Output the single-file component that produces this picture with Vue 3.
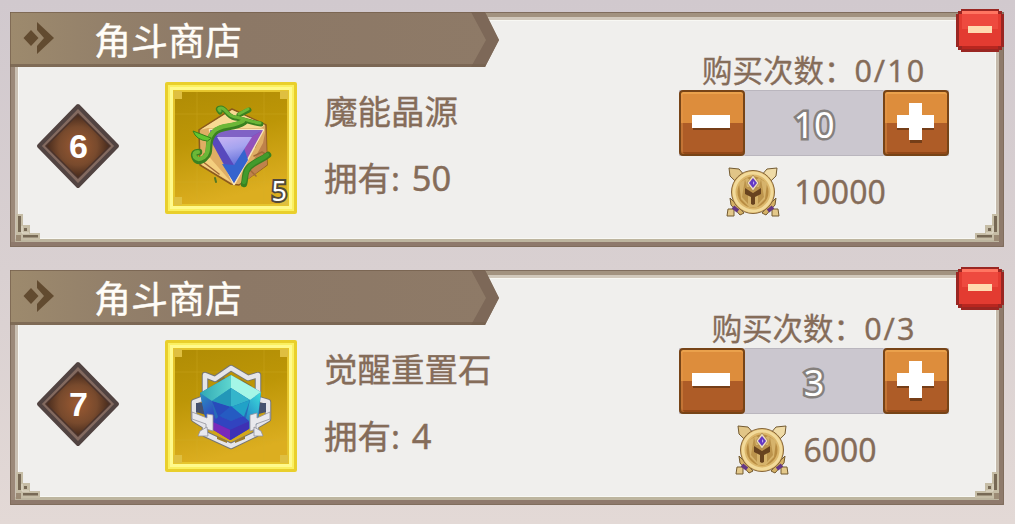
<script setup>
import { ref } from 'vue'

const goods = ref([
  { rank: 6, icon: 'source', name: '魔能晶源', owned: 50, pack: 5, count: 10, limit: 10, unit: 1000 },
  { rank: 7, icon: 'stone', name: '觉醒重置石', owned: 4, pack: 0, count: 3, limit: 3, unit: 2000 },
])

function step(g, n) {
  g.count = Math.min(g.limit, Math.max(1, g.count + n))
}
function remove(i) {
  goods.value.splice(i, 1)
}
</script>

<template>
  <div class="page">
    <section v-for="(g, i) in goods" :key="g.rank" class="card">
      <div class="left">
        <header class="banner">
          <svg class="banner-bg" width="489" height="55" viewBox="0 0 489 55">
            <defs>
              <linearGradient :id="'bn' + i" x1="0" x2="1" y1="0" y2="0">
                <stop offset="0" stop-color="#9d8a6d" />
                <stop offset=".2" stop-color="#93806a" />
                <stop offset=".45" stop-color="#8c7866" />
                <stop offset="1" stop-color="#8e7a67" />
              </linearGradient>
            </defs>
            <path d="M0 0H475L489 28L475 55H0Z" :fill="`url(#bn${i})`" />
            <path d="M461 0H475L489 28L475 55H461L476 28Z" fill="#7d6858" />
            <path d="M0 52H476L475 55H0Z" fill="#75614f" opacity=".75" />
            <path d="M0 .5H475M.5 0V55" stroke="#745e4c" opacity=".7" fill="none" />
            <path d="M13.5 26L21 18L28.5 26L21 34Z" fill="#624b30" />
            <path d="M27 10L44 26L27 42V34L34 26L27 18Z" fill="#624b30" />
          </svg>
          <h2>角斗商店</h2>
        </header>

        <div class="goods">
          <div class="rank">
            <svg width="84" height="86" viewBox="0 0 84 86">
              <defs>
                <radialGradient :id="'rk' + i">
                  <stop offset="0" stop-color="#9c5a32" />
                  <stop offset=".6" stop-color="#784a2d" />
                  <stop offset="1" stop-color="#44291c" />
                </radialGradient>
              </defs>
              <path d="M42 3L81 43L42 83L3 43Z" fill="#82695f" stroke="#514341" stroke-width="4" stroke-linejoin="round" />
              <path d="M42 11L74 43L42 75L10 43Z" :fill="`url(#rk${i})`" stroke="#4b332b" stroke-width="1.5" />
            </svg>
            <b>{{ g.rank }}</b>
          </div>

          <div class="slot">
            <svg width="134" height="134" viewBox="0 0 134 134">
              <defs>
                <linearGradient :id="'gd' + i" x1="0" x2=".25" y1="0" y2="1">
                  <stop offset="0" stop-color="#b08c05" />
                  <stop offset=".45" stop-color="#bd9607" />
                  <stop offset="1" stop-color="#dcae20" />
                </linearGradient>
                <linearGradient id="gemIn" x1="0" x2=".3" y1="0" y2="1">
                  <stop offset="0" stop-color="#c9b4f3" />
                  <stop offset=".5" stop-color="#a5a4ef" />
                  <stop offset="1" stop-color="#6b75dc" />
                </linearGradient>
                <linearGradient id="cubeTop" x1="0" x2="1" y1="0" y2="0">
                  <stop offset="0" stop-color="#31a8b4" />
                  <stop offset="1" stop-color="#5ed6cf" />
                </linearGradient>
                <linearGradient id="cubeL" x1="0" x2=".6" y1="0" y2="1">
                  <stop offset="0" stop-color="#2a93c0" />
                  <stop offset=".5" stop-color="#2f4fc0" />
                  <stop offset="1" stop-color="#6326b2" />
                </linearGradient>
                <linearGradient id="cubeR" x1="1" x2=".2" y1="0" y2="1">
                  <stop offset="0" stop-color="#3fe0dc" />
                  <stop offset=".5" stop-color="#2595c9" />
                  <stop offset="1" stop-color="#3532b8" />
                </linearGradient>
              </defs>
              <rect x="1" y="1" width="132" height="132" rx="2" fill="#e9cf2c" />
              <rect x="4" y="4" width="126" height="126" fill="#fbf060" />
              <rect x="6" y="6" width="122" height="122" fill="#fffa8c" />
              <rect x="9" y="9" width="116" height="116" fill="#e6c52d" />
              <rect x="11" y="11" width="112" height="112" :fill="`url(#gd${i})`" />
              <path d="M33 11V123M100 11V123M11 33H123M11 101H123" stroke="#d5b12c" opacity=".3" />
              <path d="M10 10h8v8h-8zM124 10h-8v8h8zM10 124h8v-8h-8zM124 124h-8v-8h8z" fill="#dfbf40" />

              <g v-if="g.icon === 'source'" stroke-linejoin="round" stroke-linecap="round">
                <path d="M68 28L102 44L103 84L75 104L67 103L36 84L35 49Z" fill="#dfae64" stroke="#8b5a1d" stroke-width="1.5" />
                <path d="M68 29L101 44L97 47L44 47L36 49Z" fill="#f8da93" />
                <path d="M102 47L103 84L76 104L99 62Z" fill="#bf824b" />
                <path d="M41 71L68 102L38 84Z" fill="#f4cf7f" />
                <path d="M40 73L38 80L55 93M90 75l8 -4l5 3M84 87l8 8M97 53l-6 13" fill="none" stroke="#a26a36" stroke-width="1.5" />
                <path d="M46 49H99L70 103Z" fill="#4c59cf" stroke="#f8e6ba" stroke-width="2.5" />
                <path d="M46 49H99L87 56H54Z" fill="#8062c5" />
                <path d="M46 49L54 56L70 84V102L48 62Z" fill="#5849bd" />
                <path d="M99 49L87 56L70 84V102Z" fill="#9252ba" />
                <path d="M84 79L70 102L58 83L70 84L80 67Z" fill="#3564ce" />
                <path d="M53 56H88L70 84Z" fill="url(#gemIn)" />
                <g fill="none" stroke="#3a8120" stroke-width="6.5">
                  <path d="M80 41C70 48 56 44 50 52C41 61 49 71 41 77Q34 83 31 77Q28 71 35 71" />
                  <path d="M56 31Q52 27 57 27C62 27 63 36 71 37S87 42 97 43M75 34L85 29" stroke-width="5" />
                  <path d="M80 103C82 97 79 89 89 83S99 78 104 74" />
                </g>
                <g fill="none" stroke="#6cb737" stroke-width="4.2">
                  <path d="M79 40C69 46 55 43 49 51C40 61 48 69 40 76Q34 80 31 76Q29 71 34 71" />
                  <path d="M56 30Q53 27 57 27C62 27 63 35 71 36S87 41 96 42M75 33L84 28" stroke-width="3" />
                  <path d="M80 101C82 96 80 88 90 82S99 77 103 74" stroke="#429b2c" />
                </g>
                <path d="M47 57L29 50Q32 59 43 60Z" fill="#62c631" stroke="#38821c" />
                <path d="M51 97l1 4" stroke="#537824" stroke-width="2" />
              </g>

              <g v-else stroke-linejoin="round">
                <g fill="none" stroke="#767674" stroke-width="6.5">
                  <path d="M41 56V36L51 40L67 29L84 39L94 36V53M38 60L30 63V80L41 87M94 60L104 63V80L92 87M41 84V95L67 107L92 95V82" />
                </g>
                <g fill="none" stroke="#e5e5e9" stroke-width="4.5">
                  <path d="M41 56V36L51 40L67 29L84 39L94 36V53M38 60L30 63V80L41 87M94 60L104 63V80L92 87M41 84V95L67 107L92 95V82" />
                </g>
                <path d="M53 42L60 38L63 41L55 45ZM75 39L88 47L82 46Z" fill="#8a7432" />
                <path d="M32 64H42V76L32 73ZM91 64H102V73L91 76Z" fill="#45516e" />
                <path d="M67 36L97 53L94 84L67 101L43 87L36 54Z" fill="#276cb8" />
                <path d="M36 54L48 62L51 79L66 88V101L43 87Z" fill="url(#cubeL)" />
                <path d="M97 53L86 61L82 79L66 88V101L93 85Z" fill="url(#cubeR)" />
                <path d="M67 36V49L48 62L36 54Z" fill="url(#cubeTop)" />
                <path d="M67 36L97 53L86 61L67 49Z" fill="#a4f6e7" />
                <path d="M67 49L86 61L67 68L48 62Z" fill="#35b5cb" />
                <path d="M67 49V68L48 62Z" fill="#2397b8" />
                <path d="M48 62L67 68L55 80Z" fill="#284bbb" />
                <path d="M86 61L67 68L79 80Z" fill="#21a2c7" />
                <path d="M67 67L79 77L67 82L55 77Z" fill="#255bc2" />
                <path d="M55 77L67 82V91L49 83ZM79 77L67 82V91L85 82Z" fill="#3144c0" />
                <path d="M49 83L66 91V101L46 89Z" fill="#7929bb" />
                <path d="M66 91L85 82V90L66 101Z" fill="#3e31b4" />
                <g fill="#e9e9ed" stroke="#90909a" stroke-width=".8">
                  <path d="M28 73L43 79L43 75L49 76V92L42 90V85L28 80Z" />
                  <path d="M106 73L93 79V74L86 76V92L92 90V85L106 80Z" />
                  <path d="M36 92L43 88L44 97L34 97ZM97 92L90 88V97H99Z" />
                </g>
                <path d="M53 97L63 102V104L53 100ZM71 102L81 97V100L71 104Z" fill="#9b7a2a" />
              </g>
            </svg>
            <span v-if="g.pack" class="pack">{{ g.pack }}</span>
          </div>

          <div class="info">
            <p>{{ g.name }}</p>
            <p>拥有: <span class="owned">{{ g.owned }}</span></p>
          </div>
        </div>
      </div>

      <div class="buy">
        <p class="limit"><span>购买次数：</span><span class="nums">0/{{ g.limit }}</span></p>
        <div class="stepper">
          <button @click="step(g, -1)">
            <svg width="40" height="40" viewBox="0 0 40 40">
              <path d="M1 14H38V27H1Z" fill="#753e18" />
              <path d="M0 12H38V25H0Z" fill="#fff" />
            </svg>
          </button>
          <output>{{ g.count }}</output>
          <button @click="step(g, 1)">
            <svg width="40" height="40" viewBox="0 0 40 40">
              <path d="M14 2H26V14H38V27H26V40H14V27H1V14H14Z" fill="#753e18" />
              <path d="M13 0H26V12H38V25H26V37H13V25H1V12H13Z" fill="#fff" />
            </svg>
          </button>
        </div>
        <div class="price">
          <svg width="54" height="50" viewBox="0 0 54 50">
            <g stroke="#735a31" stroke-width="1" stroke-linejoin="round">
              <path d="M3 1L13 2L46 40L41 45L4 9Z" fill="#e1c587" />
              <path d="M51 1L41 2L8 40L13 45L50 9Z" fill="#efdba7" />
              <path d="M4 31L10 37L18 46L14 48L5 38Z" fill="#d5b165" />
              <path d="M50 31L44 37L36 46L40 48L49 38Z" fill="#d5b165" />
              <path d="M2 42L8 42L8 49H1ZM52 42L46 42L46 49H53Z" fill="#e4c98b" />
            </g>
            <path d="M7 40l5 4M47 40l-5 4" stroke="#643783" stroke-width="4" />
            <circle cx="27" cy="25" r="21.5" fill="#dcb76b" stroke="#866538" />
            <circle cx="27" cy="25" r="19" fill="none" stroke="#f2da9a" stroke-width="3" />
            <circle cx="27" cy="25" r="15.5" fill="#b88c42" />
            <path d="M13 16L21 11L27 14L33 11L41 16L39 32L31 40H23L15 32Z" fill="#d6b36b" />
            <path d="M19 12L16 30L22 37V26L18 21L27 26L36 21L32 26V37L38 30L35 12L33 20H21Z" fill="#bc944c" />
            <path d="M19 21L27 26L35 21V27L29 30V37L27 38L25 37V30L19 27Z" fill="#68431f" />
            <path d="M27 8L33 16L27 24L21 16Z" fill="#f0dfbd" stroke="#a28047" stroke-width=".7" />
            <path d="M27 11L31 16L27 21L23 16Z" fill="#6438c4" />
            <path d="M27 14L28.5 16L27 18Z" fill="#c2a8f1" />
          </svg>
          <span>{{ g.count * g.unit }}</span>
        </div>
      </div>

      <svg v-for="side in ['l', 'r']" :key="side" class="corner" :class="side" width="26" height="27" viewBox="0 0 26 27">
        <path d="M0 0H7V11H14V19H24V26H0Z" fill="#c6bda6" />
        <path d="M2 2H5V18H2ZM8 14H11V17H8ZM7 21H22V23.5H7Z" fill="#776955" />
        <path d="M6 12V19H13" stroke="#e5decd" fill="none" />
        <path d="M0 21H5V27H0Z" fill="#9c8b75" />
      </svg>

      <button class="remove" @click="remove(i)">
        <svg width="48" height="44" viewBox="0 0 48 44">
          <path d="M5 0H43V2H46V5H48V38H46V41H43V43H5V41H2V38H0V5H2V2H5Z" fill="#9a2622" />
          <path d="M6 2H42V5H45V37H42V40H6V37H3V5H6Z" fill="#e33b31" />
          <path d="M6 2H42V5H6Z" fill="#ff7561" />
          <path d="M6 5H42V20H6Z" fill="#ee4a3f" />
          <path d="M6 37H42V40H6Z" fill="#b8261f" />
          <path d="M12 17H36V24H12Z" fill="#ffdab0" />
        </svg>
      </button>
    </section>
  </div>
</template>

<style>
body { background: #e1d8d6; overflow: hidden; }
</style>

<style scoped>
.page {
  box-sizing: border-box;
  width: 1015px;
  height: 524px;
  padding: 12px 11px 0 10px;
  display: flex;
  flex-direction: column;
  gap: 23px;
  background: linear-gradient(#d1c9ce, #d9d0d1 52%, #e3d9d6);
  font-family: "Noto Sans", "Noto Sans CJK SC", sans-serif;
  color: #856c59;
}
p, h2 { margin: 0; font-weight: 400; }
svg { display: block; flex: none; }
button { border: 0; padding: 0; cursor: pointer; }

.card {
  position: relative;
  box-sizing: border-box;
  height: 235px;
  display: grid;
  grid-template-columns: 669px 270px;
  background: #f0efed;
  border-radius: 1px;
  box-shadow:
    inset 0 1px #806d5d,
    inset 1px 0 #806d5d,
    inset -1px -1px #806d5d,
    inset 0 -5px #8e796c,
    inset 5px 0 #9c8979,
    inset -5px 0 #8e7a6b,
    inset 0 5px #a2927f,
    inset 0 -8px #bdb59f,
    inset 8px 0 #c9bfb2,
    inset -8px 0 #c5baab,
    inset 0 8px #d1c8bb,
    inset 0 0 0 9px #f8f8f4;
}
.banner { position: relative; width: 489px; height: 55px; }
.banner-bg { position: absolute; left: 0; top: 0; }
.banner h2 {
  position: relative;
  padding-left: 84px;
  font-size: 37px;
  line-height: 57px;
  color: #fffdf8;
  -webkit-text-stroke: .4px #fffdf8;
}

.goods { display: flex; padding: 14px 0 0 26px; }
.rank { width: 84px; height: 86px; margin-top: 22px; display: grid; }
.rank > * { grid-area: 1 / 1; }
.rank b {
  place-self: center;
  padding-left: 1px;
  font: bold 34px/40px "Liberation Sans", sans-serif;
  color: #fff;
}
.slot { position: relative; width: 134px; height: 134px; margin-left: 44px; }
.pack {
  position: absolute;
  right: 11px;
  bottom: 9px;
  font-size: 27px;
  line-height: 30px;
  color: #fff;
  -webkit-text-stroke: 4px #51493a;
  paint-order: stroke fill;
}
.info {
  margin: 5px 0 0 26px;
  font-size: 33.5px;
  line-height: 50px;
  -webkit-text-stroke: .4px #856c59;
}
.info p + p { margin-top: 17px; }
.owned { margin-left: 3px; font-size: 34.5px; line-height: 1; }

.buy { padding-top: 36px; display: flex; flex-direction: column; align-items: center; }
.limit {
  height: 42px;
  line-height: 44px;
  font-size: 30.5px;
  white-space: nowrap;
  -webkit-text-stroke: .3px #856c59;
}
.nums { letter-spacing: 2px; }
.stepper {
  display: flex;
  width: 270px;
  height: 66px;
  background: #cbc7cf;
}
.stepper button {
  display: grid;
  place-items: center;
  width: 66px;
  height: 66px;
  border-radius: 4px;
  border: 2px solid #774417;
  background: linear-gradient(#dd8d3c 50%, #ae5c27 50%);
  box-shadow: inset 0 2px #eaa14c, inset 2px 0 rgba(235, 160, 80, .35), inset 0 -2px #934818;
}
.stepper svg { overflow: visible; }
.stepper output {
  flex: 1;
  box-sizing: border-box;
  border-top: 1px solid #bab6be;
  border-bottom: 1px solid #bab6be;
  text-align: center;
  font-size: 36px;
  line-height: 67px;
  color: #fff;
  -webkit-text-stroke: 5px #85807d;
  paint-order: stroke fill;
}
.price {
  display: flex;
  align-items: center;
  gap: 14px;
  margin: 11px 16px 0 0;
  font-size: 32px;
  line-height: 48px;
  -webkit-text-stroke: .3px #856c59;
}

.corner { position: absolute; bottom: 6px; }
.corner.l { left: 6px; }
.corner.r { right: 5px; transform: scaleX(-1); }
.remove { position: absolute; right: 0; top: -3px; background: none; }
</style>
